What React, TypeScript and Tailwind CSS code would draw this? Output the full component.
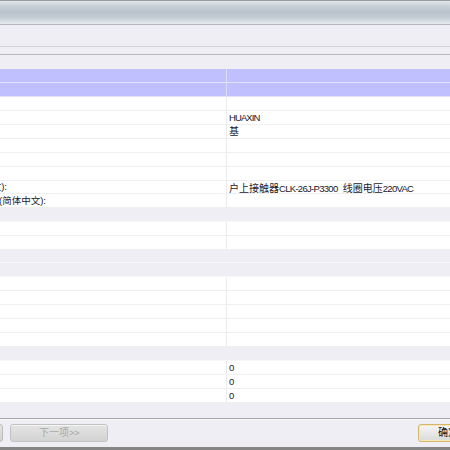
import React from "react";

type RowType = "p" | "w" | "g";
interface RowDef {
  t: RowType;
  h: number;
  left?: { text: string; end: number };
  right?: React.ReactNode;
}

const lat = "text-[9.5px] tracking-[-0.9px]";
const lat2 = "text-[9.5px] tracking-[-0.7px]";
const cjk = "text-[10px] tracking-[0px]";

const rows: RowDef[] = [
  { t: "p", h: 14 },
  { t: "p", h: 14 },
  { t: "w", h: 14 },
  { t: "w", h: 14, right: <span className={lat}>HUAXIN</span> },
  { t: "w", h: 14, right: <span className={cjk}>基</span> },
  { t: "w", h: 14 },
  { t: "w", h: 14 },
  { t: "w", h: 14 },
  {
    t: "w",
    h: 13,
    left: { text: "描述(英文):", end: 7 },
    right: (
      <span className="whitespace-pre">
        <span className={cjk}>户上接触器</span>
        <span className={lat2}>CLK-26J-P3300</span>
        <span className="text-[9.5px]">{"  "}</span>
        <span className={cjk}>线圈电压</span>
        <span className={lat2}>220VAC</span>
      </span>
    ),
  },
  { t: "w", h: 14, left: { text: "描述(简体中文):", end: 46 } },
  { t: "g", h: 14 },
  { t: "w", h: 14 },
  { t: "w", h: 14 },
  { t: "g", h: 13 },
  { t: "g", h: 14 },
  { t: "w", h: 14 },
  { t: "w", h: 14 },
  { t: "w", h: 14 },
  { t: "w", h: 14 },
  { t: "w", h: 14 },
  { t: "g", h: 14 },
  { t: "w", h: 14, right: <span className={lat}>0</span> },
  { t: "w", h: 14, right: <span className={lat}>0</span> },
  { t: "w", h: 14, right: <span className={lat}>0</span> },
];

function Row({ r }: { r: RowDef }) {
  if (r.t === "g") {
    return (
      <div
        className="w-full shrink-0 bg-[#efeef4] border-b border-[#f7f7fa]"
        style={{ height: r.h }}
      />
    );
  }
  const isP = r.t === "p";
  return (
    <div
      className={
        "flex w-full shrink-0 border-b " +
        (isP ? "bg-[#c0c0ff] border-[#e2e2ff]" : "bg-white border-[#efefef]")
      }
      style={{ height: r.h }}
    >
      <div
        className={
          "flex h-full w-[227px] shrink-0 items-center border-r " +
          (isP ? "border-[#dcdcff]" : "border-[#ebebeb]")
        }
      >
        {r.left && (
          <div
            className="flex shrink-0 justify-end whitespace-nowrap text-[9.5px] leading-none text-[#1a1a2a]"
            style={{ width: r.left.end }}
          >
            <span>{r.left.text}</span>
          </div>
        )}
      </div>
      <div className="flex h-full flex-1 items-center whitespace-nowrap pl-[2px] leading-none text-[#1a1a2a]">
        {r.right}
      </div>
    </div>
  );
}

export default function App() {
  return (
    <div
      className="flex h-[450px] w-[450px] flex-col overflow-hidden bg-[#efeef4]"
      style={{ fontFamily: '"Liberation Sans", "Noto Sans CJK SC", sans-serif' }}
    >
      <div className="h-[1px] shrink-0 bg-[#9c9c9c]" />
      <div className="h-[23px] shrink-0 bg-[linear-gradient(to_bottom,#e2e6ea_0%,#c6ced5_25%,#b9c3cb_50%,#c6ced6_75%,#e7ebf1_100%)]" />
      <div className="h-[1px] shrink-0 bg-[#b4b8be]" />
      <div className="h-[21px] shrink-0 bg-[#efeef4]" />
      <div className="h-[1px] shrink-0 bg-[#d4d4d8]" />
      <div className="h-[7px] shrink-0 bg-[#efeef4]" />
      <div className="h-[1px] shrink-0 bg-[#b5b9bd]" />
      <div className="h-[14px] shrink-0 bg-[#efeef4]" />

      {rows.map((r, i) => (
        <Row key={i} r={r} />
      ))}
      <div className="h-[15px] shrink-0 bg-[#efeef4]" />

      <div className="h-[1px] shrink-0 bg-[#a8a8a8]" />
      <div className="h-[1px] shrink-0 bg-[#fafafa]" />
      <div className="flex h-[27px] shrink-0 items-start bg-[#efeef4] pt-[4px]">
        <div className="ml-[-67px] h-[18px] w-[70px] shrink-0 rounded-[3px] border border-[#bdbdbd] bg-[linear-gradient(to_bottom,#e4e4e4,#d2d2d2)]" />
        <div className="ml-[7px] flex h-[18px] w-[98px] shrink-0 items-center justify-center rounded-[3px] border border-[#c2c2c2] bg-[linear-gradient(to_bottom,#e4e4e4,#d3d3d3)] shadow-[inset_0_1px_0_#f4f4f4] text-[#a8a8a8] leading-none">
          <span className="text-[10px]">下一项</span>
          <span className="text-[9.5px] tracking-[-0.5px]">&gt;&gt;</span>
        </div>
        <div className="ml-[310px] flex h-[18px] w-[60px] shrink-0 items-center justify-center rounded-[3px] border border-[#d6b66a] bg-[linear-gradient(to_bottom,#f6f6f6,#dadada)] shadow-[inset_0_0_0_1px_#f6e6b8] text-[10px] leading-none text-[#111]">
          确定
        </div>
      </div>
      <div className="h-[3px] shrink-0 bg-[#858585]" />
    </div>
  );
}
